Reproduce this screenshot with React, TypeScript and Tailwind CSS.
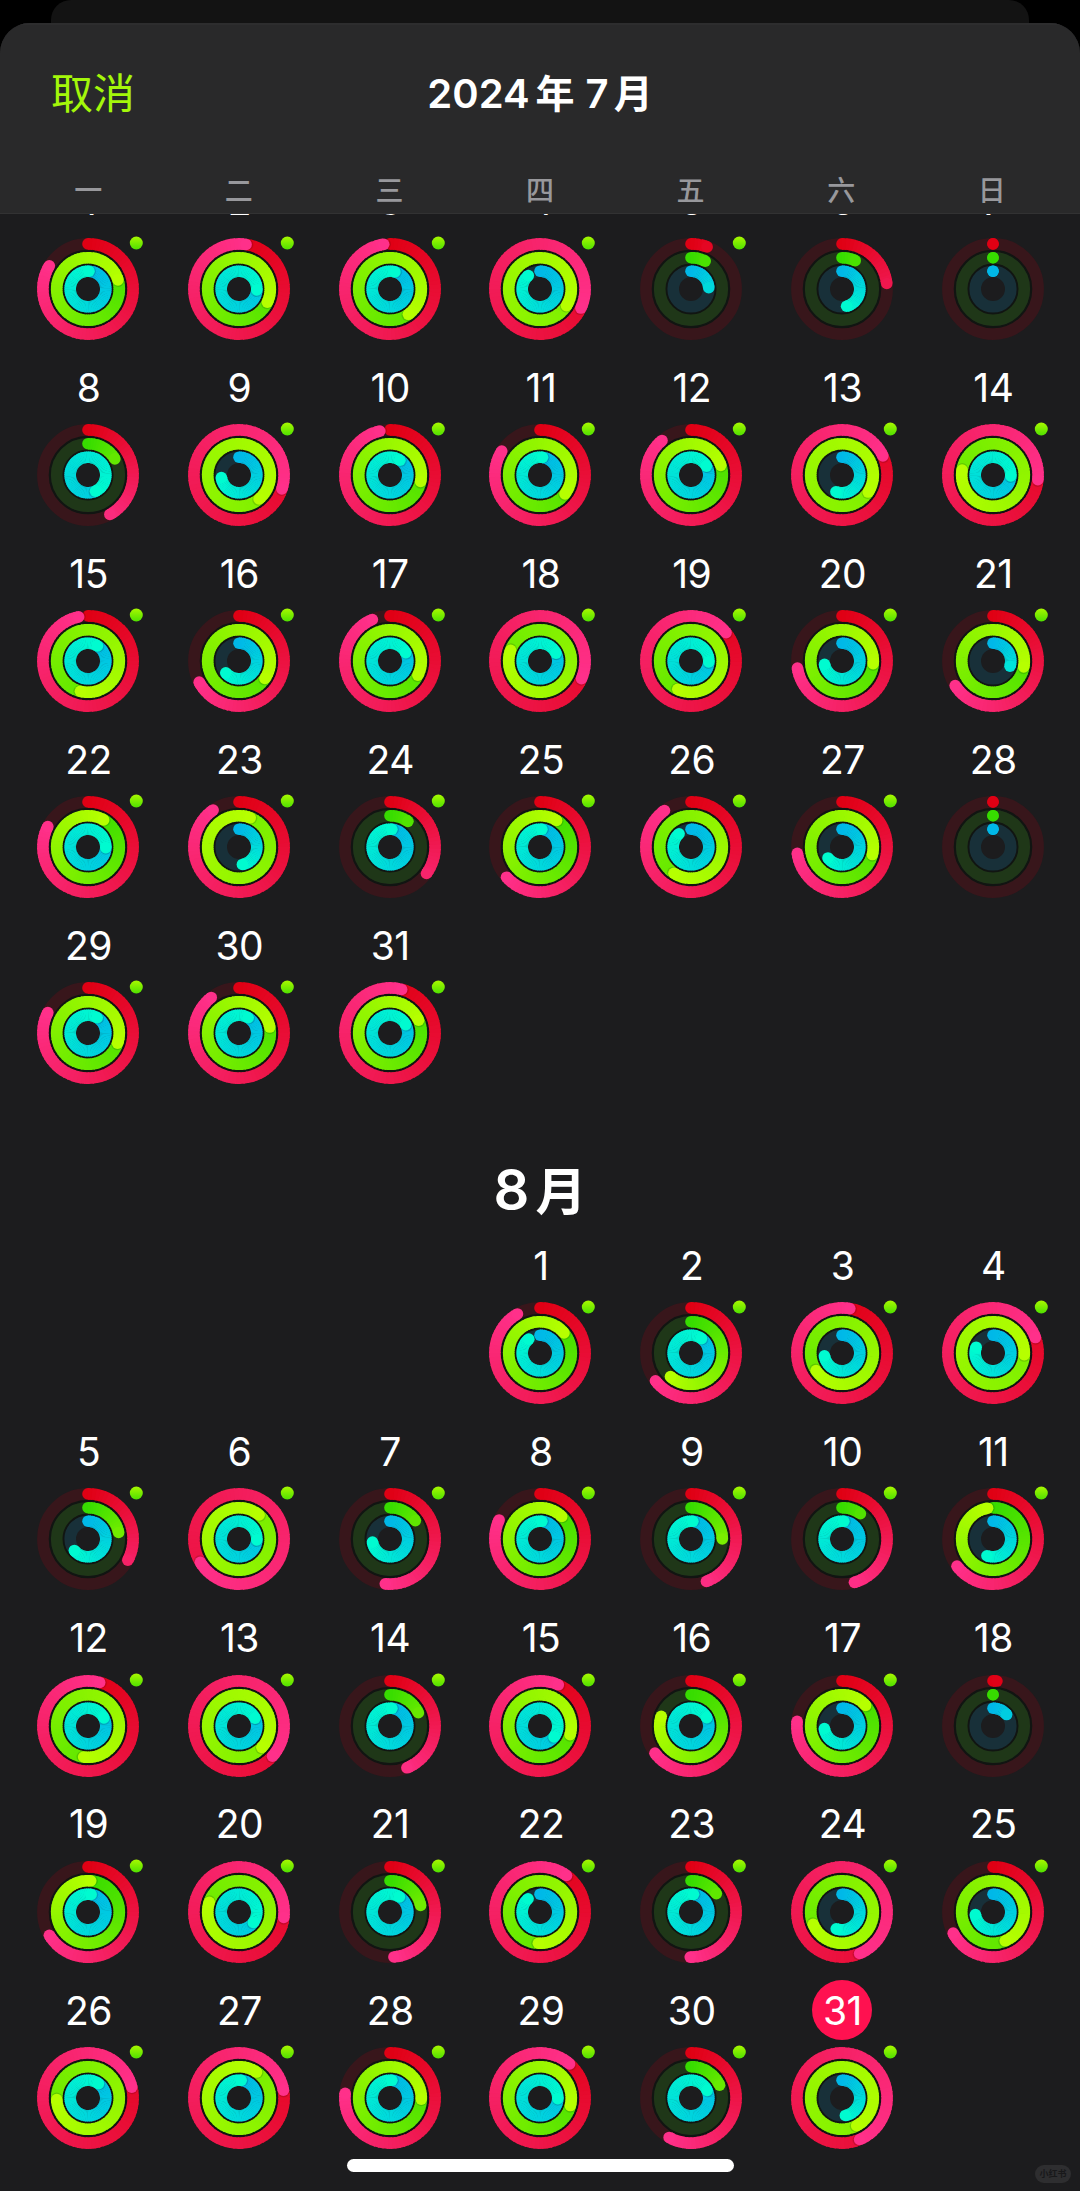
import { FC } from 'react';

type RGB = [number, number, number];

interface IDay {
  day: number;
  // sweep of move / exercise / stand in degrees, more than 360 means a second lap
  rings: [number, number, number];
  workout?: boolean;
  today?: boolean;
}

const d = (
  day: number,
  move: number,
  exercise: number,
  stand: number,
  workout = true,
  today = false
): IDay => ({ day, rings: [move, exercise, stand], workout, today });

const weekdays = ['一', '二', '三', '四', '五', '六', '日'];

const july: IDay[] = [
  d(1, 301, 433, 363),
  d(2, 369, 475, 453),
  d(3, 352, 504, 376),
  d(4, 475, 842, 319),
  d(5, 21, 27, 86),
  d(6, 83, 25, 165, false),
  d(7, 0, 0, 0, false),
  d(8, 151, 59, 515, false),
  d(9, 468, 860, 262),
  d(10, 347, 462, 394),
  d(11, 302, 487, 368),
  d(12, 320, 432, 420),
  d(13, 425, 843, 200),
  d(14, 456, 639, 453),
  d(15, 348, 554, 392),
  d(16, 242, 484, 228),
  d(17, 337, 477, 422),
  d(18, 473, 650, 424),
  d(19, 411, 565, 453),
  d(20, 261, 455, 259),
  d(21, 237, 461, 107),
  d(22, 297, 390, 452),
  d(23, 325, 741, 169),
  d(24, 126, 35, 366),
  d(25, 228, 392, 366),
  d(26, 324, 573, 318),
  d(27, 262, 464, 232),
  d(28, 0, 0, 0, false),
  d(29, 297, 469, 391),
  d(30, 322, 439, 391),
  d(31, 375, 426, 422),
];

const august: IDay[] = [
  d(1, 330, 410, 321),
  d(2, 232, 221, 396),
  d(3, 370, 596, 261),
  d(4, 430, 813, 289),
  d(5, 118, 78, 230),
  d(6, 599, 760, 453),
  d(7, 186, 54, 260),
  d(8, 295, 404, 366),
  d(9, 160, 90, 366),
  d(10, 164, 36, 366),
  d(11, 233, 350, 200),
  d(12, 375, 548, 423),
  d(13, 492, 853, 424),
  d(14, 158, 65, 366),
  d(15, 384, 466, 488),
  d(16, 233, 288, 422),
  d(17, 276, 409, 262),
  d(18, 5, 0, 50, false),
  d(19, 239, 365, 370),
  d(20, 457, 648, 486),
  d(21, 175, 78, 392),
  d(22, 396, 543, 318),
  d(23, 181, 54, 368),
  d(24, 517, 607, 199),
  d(25, 242, 517, 262),
  d(26, 436, 627, 396),
  d(27, 440, 754, 367),
  d(28, 276, 452, 366),
  d(29, 401, 464, 452),
  d(30, 209, 66, 425),
  d(31, 517, 872, 169, true, true),
];

const ringStyles: { r: number; track: string; from: RGB; to: RGB }[] = [
  { r: 45.1, track: '#38161b', from: [224, 0, 20], to: [255, 48, 138] },
  { r: 31.3, track: '#1f3718', from: [55, 220, 0], to: [182, 255, 0] },
  { r: 17.8, track: '#183039', from: [0, 184, 232], to: [0, 251, 208] },
];

const STROKE = 11.6;

const mix = (a: RGB, b: RGB, t: number) =>
  `rgb(${a.map((v, i) => Math.round(v + (b[i] - v) * t)).join(',')})`;

const point = (r: number, deg: number) => {
  const a = (deg * Math.PI) / 180;
  return [r * Math.sin(a), -r * Math.cos(a)];
};

const arc = (r: number, a: number, b: number) => {
  const [x1, y1] = point(r, a);
  const [x2, y2] = point(r, b);
  return `M${x1.toFixed(2)} ${y1.toFixed(2)}A${r} ${r} 0 0 1 ${x2.toFixed(
    2
  )} ${y2.toFixed(2)}`;
};

interface IRingProps {
  index: number;
  sweep: number;
}

const Ring: FC<IRingProps> = ({ index, sweep }) => {
  const { r, track, from, to } = ringStyles[index];
  const color = (deg: number) => mix(from, to, deg / Math.max(sweep, 170));
  const start = Math.max(0, sweep - 360);
  const steps = Math.ceil((sweep - start) / 5);
  const size = steps ? (sweep - start) / steps : 0;
  const [tipX, tipY] = point(r, sweep);
  const [shadowX, shadowY] = point(r, sweep + 80 / r);

  return (
    <g fill="none" strokeWidth={STROKE}>
      <circle r={r} stroke={track} />
      {sweep <= 360 && <circle cy={-r} r={STROKE / 2} fill={color(0)} strokeWidth={0} />}
      {Array.from({ length: steps }, (_, i) => {
        const a = start + i * size;
        const overlap = i < steps - 1 ? 1.5 : 0;
        return (
          <path
            key={i}
            d={arc(r, a, a + size + overlap)}
            stroke={color(a + size / 2)}
          />
        );
      })}
      {sweep > 340 && (
        <circle
          cx={shadowX}
          cy={shadowY}
          r={STROKE / 2}
          fill="#000"
          fillOpacity={0.14}
          strokeWidth={0}
        />
      )}
      <circle cx={tipX} cy={tipY} r={STROKE / 2} fill={color(sweep)} strokeWidth={0} />
    </g>
  );
};

const Rings: FC<{ item: IDay }> = ({ item }) => (
  <svg viewBox="-51 -51 102 102" className="w-[102px] h-[102px] overflow-visible">
    <circle r={38.4} fill="none" stroke="#0c130c" strokeOpacity={0.65} strokeWidth={3} />
    <circle r={24.6} fill="none" stroke="#0c130c" strokeOpacity={0.65} strokeWidth={3} />
    {item.rings.map((sweep, index) => (
      <Ring key={index} index={index} sweep={sweep} />
    ))}
    {item.workout && <circle cx={48.3} cy={-46} r={6.5} fill="url(#workout)" />}
  </svg>
);

const Day: FC<{ item: IDay }> = ({ item }) => (
  <div className="h-[186.2px] flex flex-col items-center">
    <div
      className={`w-[60px] h-[60px] rounded-full flex items-center justify-center text-[39px] leading-none tracking-[-0.5px] ${
        item.today ? 'bg-[#ff1150]' : ''
      }`}
    >
      <span className="pl-px">{item.day}</span>
    </div>
    <div className="mt-[6.8px]">
      <Rings item={item} />
    </div>
  </div>
);

const Month: FC<{ days: IDay[]; offset?: number }> = ({ days, offset = 0 }) => (
  <div className="grid grid-cols-7 pl-[12.7px] pr-[11.8px]">
    {Array.from({ length: offset }, (_, i) => (
      <div key={`empty-${i}`} />
    ))}
    {days.map((item) => (
      <Day key={item.day} item={item} />
    ))}
  </div>
);

export default function App() {
  return (
    <div className="relative w-[1080px] h-[2191px] overflow-hidden bg-black text-white font-['Inter','Noto_Sans_CJK_SC',sans-serif]">
      <svg className="absolute w-0 h-0">
        <defs>
          <linearGradient id="workout" x1="0" y1="0" x2="0" y2="1">
            <stop offset="0" stopColor="#a8f800" />
            <stop offset="1" stopColor="#4fe000" />
          </linearGradient>
        </defs>
      </svg>

      {/* sheet behind the calendar */}
      <div className="h-[23px] mx-[51px] rounded-t-[20px] bg-[#131313]" />

      <div className="h-[2168px] rounded-t-[30px] overflow-hidden bg-[#1c1c1e]">
        <header className="relative z-10 h-[191px] bg-[#29292a] border-t-2 border-b border-t-[#2d2d2e] border-b-[#323233]">
          <div className="h-[141px] px-[51px] grid grid-cols-3 items-center">
            <button
              type="button"
              className="pb-[3px] text-left text-[42px] leading-none text-[#a4f70a]"
            >
              取消
            </button>
            <h1 className="pb-1 text-center text-[40px] leading-none font-semibold whitespace-nowrap">
              2024<span className="ml-[6px] text-[39px]">年</span>
              <span className="ml-[11px]">7</span>
              <span className="ml-[5px] text-[39px]">月</span>
            </h1>
          </div>
          <div className="grid grid-cols-7 px-[13px] text-center text-[28px] leading-[50px] font-medium text-[#98989c]">
            {weekdays.map((name) => (
              <span key={name}>{name}</span>
            ))}
          </div>
        </header>

        <main className="-mt-[43.1px]">
          <Month days={july} />
          <h2 className="h-[133.5px] pt-[60px] text-center text-[56px] leading-[56px] font-semibold">
            8<span className="ml-1.5 text-[51px]">月</span>
          </h2>
          <Month days={august} offset={3} />
        </main>
      </div>

      {/* home indicator */}
      <div className="absolute left-[347px] top-[2159px] w-[387px] h-[13px] rounded-full bg-white" />
      <div className="absolute left-[1035px] top-[2165px] w-[36px] h-[18px] rounded-full bg-[#2e2e30] text-center text-[9px] leading-[18px] font-bold text-[#18181a]">
        小红书
      </div>
    </div>
  );
}
